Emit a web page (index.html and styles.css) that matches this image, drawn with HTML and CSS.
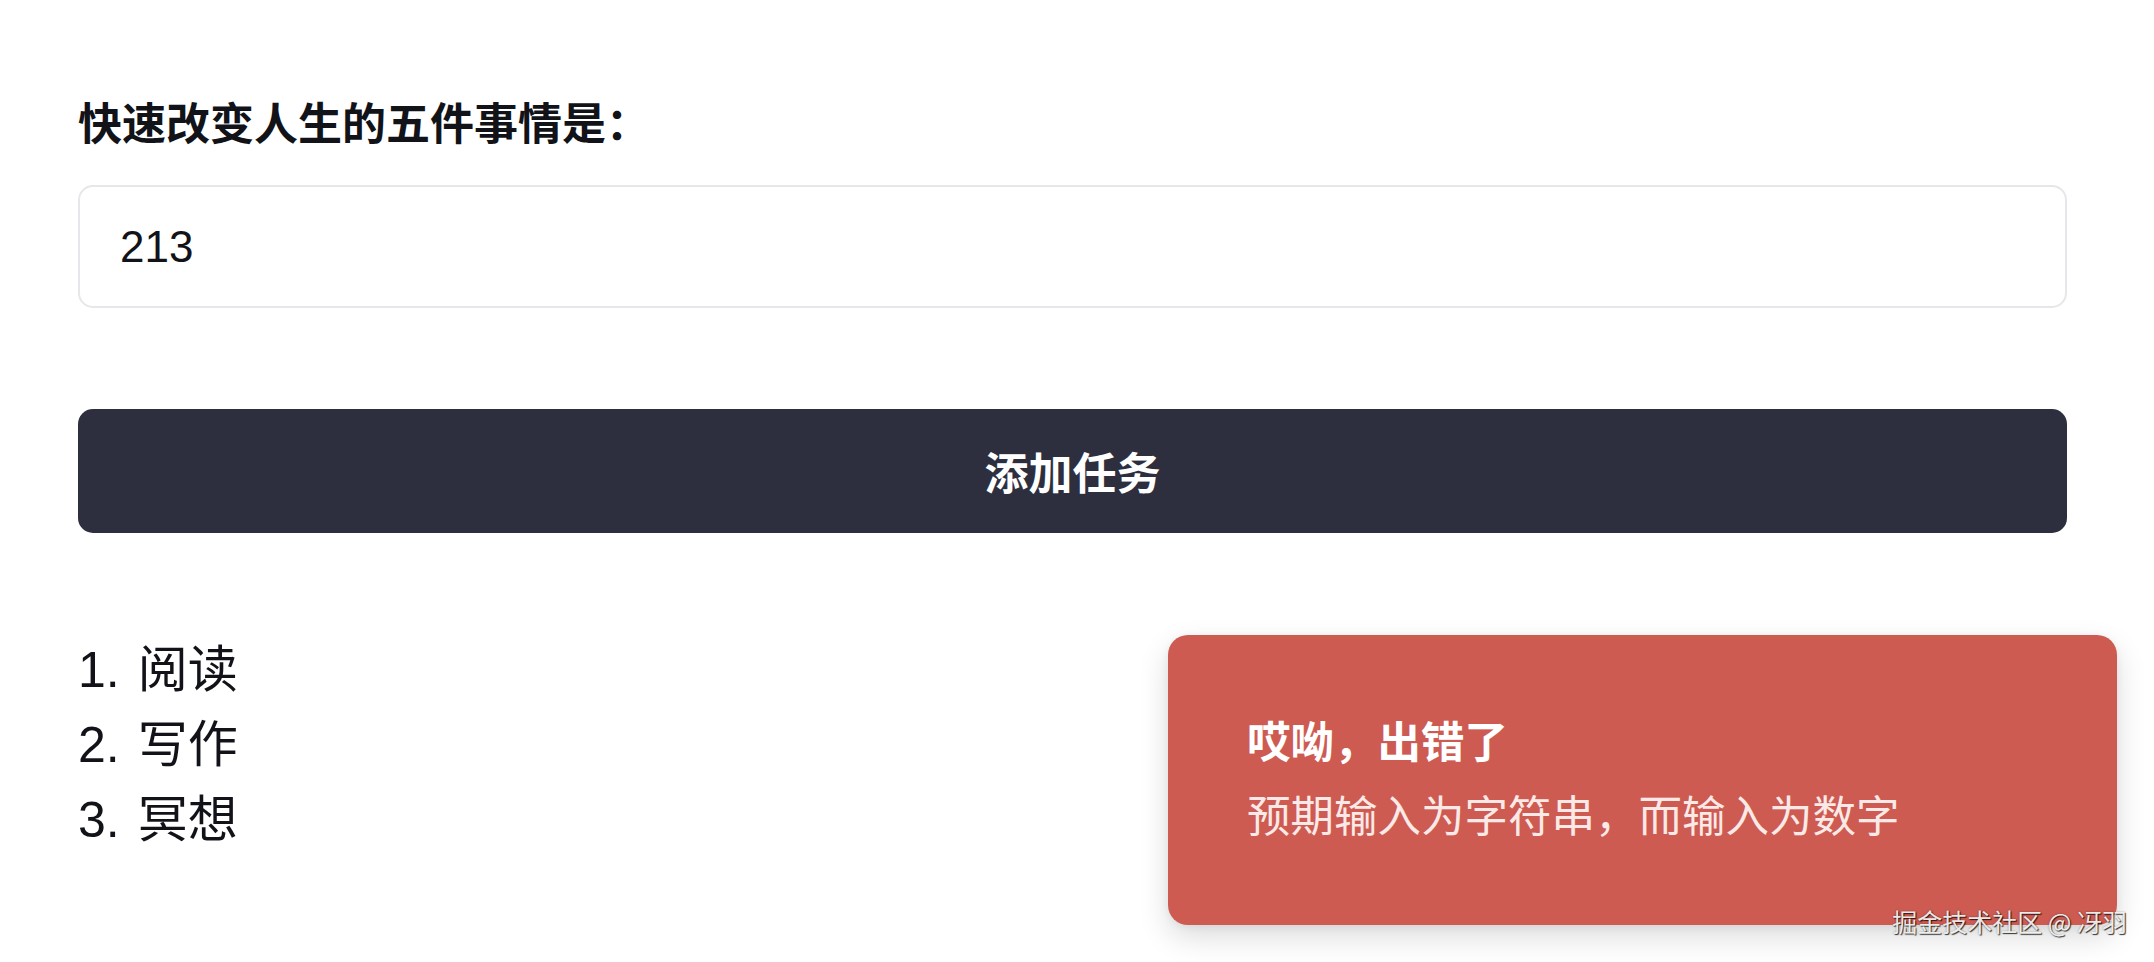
FILE: index.html
```html
<!DOCTYPE html>
<html lang="zh-CN">
<head>
<meta charset="utf-8">
<title>任务列表</title>
<link rel="stylesheet" href="styles.css">
</head>
<body>
<main class="page">
  <label class="field-label" for="task">快速改变人生的五件事情是：</label>
  <input class="task-input" id="task" type="text" value="213">
  <button class="add-btn" type="button">添加任务</button>
  <ol class="task-list">
    <li>阅读</li>
    <li>写作</li>
    <li>冥想</li>
  </ol>
</main>
<div class="toast">
  <div class="toast-title">哎呦，出错了</div>
  <div class="toast-msg">预期输入为字符串，而输入为数字</div>
</div>
<div class="watermark">掘金技术社区 @ 冴羽</div>
</body>
</html>
```
FILE: styles.css
```css
html, body {
  margin: 0;
  padding: 0;
  background: #ffffff;
}

body {
  font-family: "Liberation Sans", "Noto Sans CJK SC", sans-serif;
  color: #14161c;
  width: 2154px;
  height: 962px;
  overflow: hidden;
  position: relative;
}

.page {
  display: flex;
  flex-direction: column;
  padding: 95px 87px 0 78px;
}

.field-label {
  display: block;
  font-size: 44px;
  font-weight: 700;
  line-height: 60px;
  margin-bottom: 30px;
  color: #111318;
}

.task-input {
  box-sizing: border-box;
  width: 100%;
  height: 123px;
  border: 2px solid #e6e7ea;
  border-radius: 15px;
  padding: 0 40px;
  font-family: "Liberation Sans", "Noto Sans CJK SC", sans-serif;
  font-size: 44px;
  color: #111318;
  background: #fff;
  outline: none;
}

.add-btn {
  margin-top: 101px;
  width: 100%;
  height: 124px;
  border: none;
  border-radius: 15px;
  background: #2d2f3e;
  color: #ffffff;
  font-family: "Liberation Sans", "Noto Sans CJK SC", sans-serif;
  font-size: 44px;
  font-weight: 700;
  cursor: pointer;
}

.task-list {
  margin: 100px 0 0 0;
  padding: 0;
  list-style: none;
  counter-reset: task;
  font-size: 50px;
  line-height: 75px;
  color: #111318;
}

.task-list li {
  counter-increment: task;
}

.task-list li::before {
  content: counter(task) ".";
  margin-right: 18px;
}

.toast {
  position: absolute;
  left: 1168px;
  top: 635px;
  width: 949px;
  height: 290px;
  box-sizing: border-box;
  padding: 80px 79px;
  border-radius: 20px;
  background: #cd5b51;
  color: #ffffff;
  box-shadow: 0 12px 30px rgba(0, 0, 0, 0.14), 0 2px 8px rgba(0, 0, 0, 0.06);
}

.toast-title {
  font-size: 43.5px;
  font-weight: 700;
  line-height: 56px;
}

.toast-msg {
  margin-top: 18px;
  font-size: 43.5px;
  line-height: 56px;
  color: #fbe9e7;
}

.watermark {
  position: absolute;
  right: 27px;
  top: 903px;
  font-family: "Noto Sans CJK SC", sans-serif;
  font-size: 25px;
  line-height: 36px;
  color: rgba(245, 245, 245, 0.95);
  text-shadow: 1px 1px 1px rgba(0, 0, 0, 0.75), 0 0 2px rgba(0, 0, 0, 0.35);
}
```
